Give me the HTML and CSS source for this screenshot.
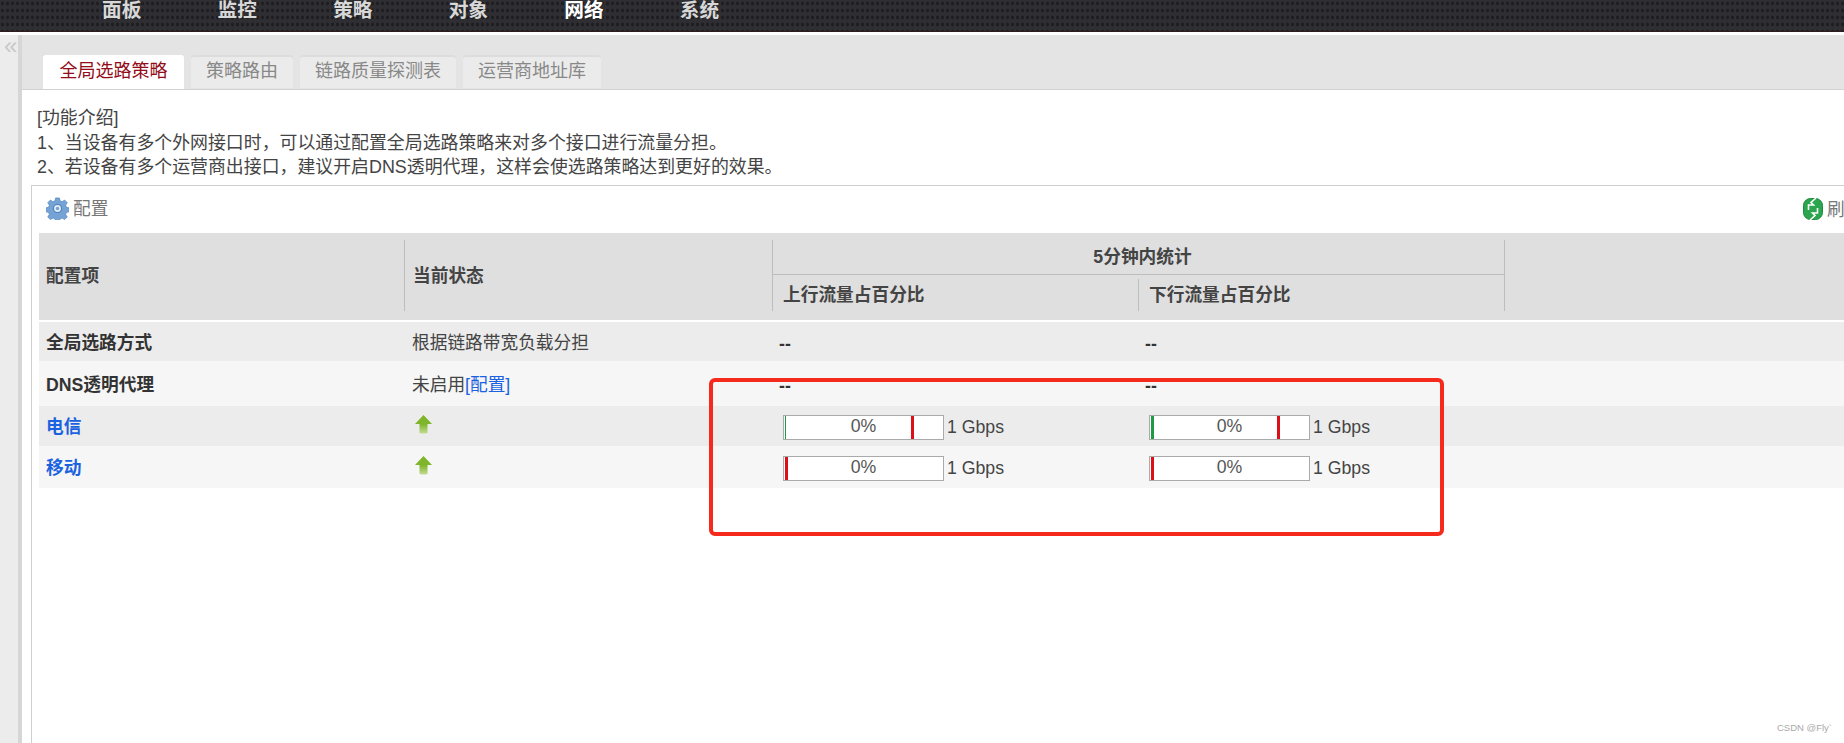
FILE: index.html
```html
<!DOCTYPE html>
<html lang="zh-CN">
  <head>
    <meta charset="UTF-8" />
    <title>全局选路策略</title>
    <link rel="stylesheet" href="styles.css">
  </head>
  <body>
    <header class="topbar">
      <nav class="topnav">
        <a>面板</a>
        <a>监控</a>
        <a>策略</a>
        <a>对象</a>
        <a class="current">网络</a>
        <a>系统</a>
      </nav>
    </header>

    <div class="layout">
      <aside class="sidebar"><span class="collapse">«</span></aside>

      <main class="content">
        <ul class="tabs">
          <li class="tab active">全局选路策略</li>
          <li class="tab">策略路由</li>
          <li class="tab">链路质量探测表</li>
          <li class="tab">运营商地址库</li>
        </ul>

        <div class="intro">
          <p>[功能介绍]</p>
          <p>1、当设备有多个外网接口时，可以通过配置全局选路策略来对多个接口进行流量分担。</p>
          <p>2、若设备有多个运营商出接口，建议开启DNS透明代理，这样会使选路策略达到更好的效果。</p>
        </div>

        <section class="panel">
          <div class="toolbar">
            <span class="tool">
              <svg class="tool-icon" viewBox="0 0 24 24" width="23" height="23">
                <path fill="#76a3d6" stroke="#4f81ba" stroke-width="0.7" d="M10 1h4l.6 3 2.2.9 2.6-1.7 2.8 2.8-1.7 2.6.9 2.2 3 .6v4l-3 .6-.9 2.2 1.7 2.6-2.8 2.8-2.6-1.7-2.2.9-.6 3h-4l-.6-3-2.2-.9-2.6 1.7-2.8-2.8 1.7-2.6-.9-2.2-3-.6v-4l3-.6.9-2.2-1.7-2.600 2.8-2.8 2.6 1.700 2.2-.9z" />
                <circle cx="12" cy="12" r="4.800" fill="#4f81ba" />
                <circle cx="12" cy="12" r="3.600" fill="#e4edf7" />
                <circle cx="12" cy="12" r="1.800" fill="#76a3d6" />
              </svg>
              配置
            </span>
            <span class="tool refresh">
              <svg class="tool-icon" viewBox="0 0 20 22" width="20" height="22">
                <rect x="0.500" y="0.500" width="19" height="21" rx="7" fill="#2ba64e" stroke="#1d8a3c" />
                <path fill="none" stroke="white" stroke-width="1.600" d="M13 0 8 4.500l2.500 2.500H5.500v5M7 22l5-4.500-2.500-2.500h5v-5" />
              </svg>
              刷
            </span>
          </div>

          <table class="stats">
            <colgroup>
              <col class="col-name" />
              <col class="col-state" />
              <col class="col-wide" />
              <col class="col-wide" />
              <col class="col-rest" />
            </colgroup>
            <thead>
              <tr class="head-top">
                <th rowspan="2" class="sep-none">配置项</th>
                <th rowspan="2">当前状态</th>
                <th colspan="2" class="group">5分钟内统计</th>
                <th rowspan="2"></th>
              </tr>
              <tr class="head-sub">
                <th class="sub-first">上行流量占百分比</th>
                <th>下行流量占百分比</th>
              </tr>
            </thead>
            <tbody>
              <tr>
                <td class="label">全局选路方式</td>
                <td>根据链路带宽负载分担</td>
                <td class="dash">--</td>
                <td class="dash">--</td>
                <td></td>
              </tr>
              <tr>
                <td class="label">DNS透明代理</td>
                <td>未启用<a class="link">[配置]</a></td>
                <td class="dash">--</td>
                <td class="dash">--</td>
                <td></td>
              </tr>
              <tr>
                <td class="label"><a class="link">电信</a></td>
                <td>
                  <svg class="up" viewBox="0 0 17 19" width="17" height="19">
                    <defs>
                      <linearGradient id="up-fill" x1="0" y1="0" x2="0" y2="1">
                        <stop offset="0.500" stop-color="#7fb52a" />
                        <stop offset="1" stop-color="#c3dc94" />
                      </linearGradient>
                    </defs>
                    <path fill="url(#up-fill)" d="M8.500 0 17 9h-4.500v9q-4 1-8 0V9H0z" />
                  </svg>
                </td>
                <td>
                  <div class="meter">
                    <div class="bar"><i class="mark green thin"></i><i class="mark red far"></i>0%</div>
                    1 Gbps
                  </div>
                </td>
                <td>
                  <div class="meter">
                    <div class="bar"><i class="mark green"></i><i class="mark red far"></i>0%</div>
                    1 Gbps
                  </div>
                </td>
                <td></td>
              </tr>
              <tr>
                <td class="label"><a class="link">移动</a></td>
                <td>
                  <svg class="up" viewBox="0 0 17 19" width="17" height="19">
                    <path fill="url(#up-fill)" d="M8.500 0 17 9h-4.500v9q-4 1-8 0V9H0z" />
                  </svg>
                </td>
                <td>
                  <div class="meter">
                    <div class="bar"><i class="mark red"></i>0%</div>
                    1 Gbps
                  </div>
                </td>
                <td>
                  <div class="meter">
                    <div class="bar"><i class="mark red"></i>0%</div>
                    1 Gbps
                  </div>
                </td>
                <td></td>
              </tr>
            </tbody>
          </table>
        </section>
      </main>
    </div>

    <div class="highlight"></div>
    <div class="watermark">CSDN @Fly`</div>
  </body>
</html>
```

FILE: styles.css
```css
* {
  margin: 0;
  padding: 0;
  box-sizing: border-box;
}

html,
body {
  height: 100%;
  overflow: hidden;
}

body {
  position: relative;
  display: flex;
  flex-direction: column;
  background-color: white;
  color: #444;
  font-family: "Liberation Sans", "Noto Sans CJK SC", sans-serif;
  font-size: 17.7px;
  line-height: 24.5px;
}

/* top bar */
.topbar {
  flex: 0 0 35px;
  background-color: white;
}

.topnav {
  display: flex;
  gap: 76.2px;
  height: 32px;
  padding-left: 102px;
  background-color: #2f2f33;
  background-image: radial-gradient(#1f1f22 1.2px, transparent 1.6px);
  background-size: 5px 7px;
  border-bottom: 1px solid #2e1c20;
  color: #d8d8d8;
  font-size: 19.7px;
  font-weight: bold;
  line-height: 20px;
}

.topnav .current {
  color: white;
}

/* side strip and content */
.layout {
  flex: 1;
  display: flex;
  min-height: 0;
}

.sidebar {
  flex: 0 0 22px;
  background-color: #ececec;
  border-right: 4px solid #d6d6d6;
  color: #c8c8c8;
  font-size: 24px;
  line-height: 22px;
  padding-left: 4px;
}

.content {
  flex: 1;
  display: flex;
  flex-direction: column;
  min-width: 0;
}

/* tabs */
.tabs {
  display: flex;
  flex: 0 0 53px;
  gap: 7px;
  padding: 20px 0 0 21px;
  list-style: none;
  background-color: #e4e4e4;
  border-bottom: 1px solid #d2d2d2;
}

.tab {
  height: 33px;
  padding: 0 15px;
  background-color: #ebebeb;
  border-radius: 3px 3px 0 0;
  box-shadow: inset 0 2px 0 #dcdcdc;
  color: #888;
  font-size: 18px;
  line-height: 33px;
}

.tab.active {
  height: 34px;
  padding: 0 16.5px;
  background-color: white;
  box-shadow: none;
  color: #920d18;
}

/* intro text */
.intro {
  padding: 16px 0 5px 15px;
  font-size: 17.9px;
}

/* panel */
.panel {
  flex: 1;
  margin: 0 -60px -10px 9px;
  padding: 0 8px 0 7px;
  border: 1px solid #cfcfcf;
}

.toolbar {
  display: flex;
  justify-content: space-between;
  height: 47px;
  padding: 11px 0 0 7px;
}

.tool {
  display: flex;
  align-items: flex-start;
  gap: 4px;
  color: #777;
}

.tool-icon {
  flex: none;
}

.refresh {
  width: 92px;
  padding-top: 1px;
  white-space: nowrap;
}

/* table */
.stats {
  width: 1868px;
  table-layout: fixed;
  border-collapse: collapse;
}

.col-name {
  width: 365px;
}

.col-state {
  width: 368px;
}

.col-wide {
  width: 366px;
}

.stats th {
  position: relative;
  padding: 0 0 0 9px;
  background-color: #dfdfdf;
  color: #444;
  font-weight: bold;
  text-align: left;
}

/* short separators inside the header */
.stats th::before {
  content: "";
  position: absolute;
  left: 0;
  top: 7px;
  bottom: 9px;
  width: 1px;
  background-color: #bdbdbd;
}

.stats th.sep-none {
  padding-left: 7px;
}

.stats th.sep-none::before {
  display: none;
}

.head-top th {
  height: 42px;
}

.head-sub th {
  height: 46px;
  padding-left: 11px;
  padding-bottom: 4px;
}

.stats .group {
  padding-top: 8px;
  text-align: center;
  border-bottom: 1px solid #bdbdbd;
}

.stats .group::before {
  bottom: 0;
}

.stats .head-sub th::before {
  top: 4px;
}

.stats .head-sub .sub-first::before {
  top: 0;
}

thead {
  border-bottom: 2px solid white;
}

.stats td {
  height: 40px;
  padding: 4px 0 0 8px;
  background-color: #ececec;
}

.stats tbody tr:nth-child(even) td {
  height: 42px;
  background-color: #f6f6f6;
}

.stats tbody tr:nth-child(2) td {
  height: 45px;
}

.stats td.label {
  padding-left: 7px;
  color: #333;
  font-weight: bold;
}

.stats td.dash {
  padding: 6px 0 0 7px;
  color: #333;
  font-weight: bold;
}

.link {
  color: #1a62e0;
}

.up {
  display: block;
  margin: 0 0 6px 3px;
}

/* usage bars */
.meter {
  display: flex;
  align-items: center;
  gap: 3px;
  padding-left: 3px;
}

.bar {
  position: relative;
  width: 161px;
  height: 25px;
  background-color: white;
  border: 1px solid #aaa;
  line-height: 20px;
  text-align: center;
  color: #555;
}

.mark {
  position: absolute;
  top: 0;
  bottom: 0;
  left: 1px;
  width: 3px;
}

.mark.green {
  background-color: #1f9a45;
}

.mark.thin {
  width: 1px;
}

.mark.red {
  background-color: #dd1018;
}

.mark.far {
  left: 127px;
}

/* overlays */
.highlight {
  position: absolute;
  left: 709px;
  top: 378px;
  width: 735px;
  height: 158px;
  border: 4px solid #f5291c;
  border-radius: 6px;
}

.watermark {
  position: absolute;
  left: 1777px;
  top: 721px;
  color: #aaa;
  font-size: 9.5px;
  line-height: 14px;
}
```
